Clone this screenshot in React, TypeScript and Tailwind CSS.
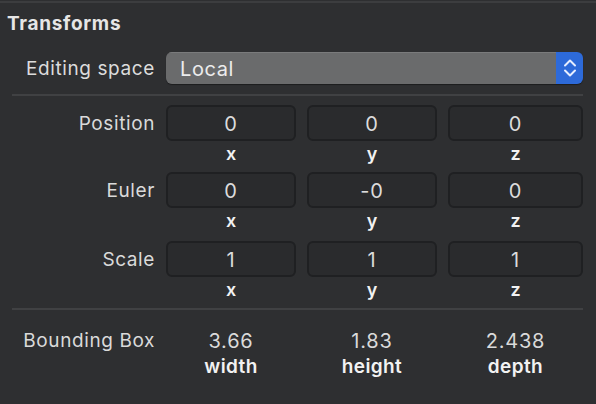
import React from "react";

const Box = ({ v }: { v: string }) => (
  <div className="h-[36px] rounded-[6px] border-2 border-[#1f2022] bg-[#2a2b2d] flex items-center justify-center pt-[2px] text-[20px] tracking-[0.8px] text-[#dcdcdc]">
    {v}
  </div>
);

const Axis = ({ t }: { t: string }) => (
  <div className="h-[24px] flex items-center justify-center text-[18px] font-semibold text-[#f2f2f2]">{t}</div>
);

const Row = ({ label, vals, mt }: { label: string; vals: string[]; mt: string }) => (
  <div className={`grid grid-cols-[155px_130px_130px_135px] gap-x-[11px] ${mt}`}>
    <div className="h-[36px] flex items-center justify-end pt-[3px] text-[19px] tracking-[0.6px] text-[#dadada]">{label}</div>
    <Box v={vals[0]} />
    <Box v={vals[1]} />
    <Box v={vals[2]} />
    <div />
    <Axis t="x" />
    <Axis t="y" />
    <Axis t="z" />
  </div>
);

export default function App() {
  return (
    <div className="w-[596px] h-[404px] bg-[#2e2f31] pt-px overflow-hidden" style={{ fontFamily: "Inter, 'Noto Sans', sans-serif" }}>
      <div className="h-[2px] bg-[#3c3d3f]" />
      <div className="h-[40px] flex items-center pt-[3px] pl-[7px] text-[19px] tracking-[0.7px] font-bold text-[#e6e6e6]">Transforms</div>
      <div className="mt-[9px] flex items-center h-[32px]">
        <div className="w-[166px] pl-[26px] pt-[2px] text-[19px] tracking-[0.6px] text-[#dcdcdc]">Editing space</div>
        <div className="flex-1 mr-[13px] h-[32px] flex rounded-[6px] overflow-hidden shadow-[0_1px_1px_rgba(0,0,0,0.4)]">
          <div className="flex-1 bg-[#6a6b6c] border-t border-[#7a7b7c] flex items-center pl-[14px] pt-[1px] text-[20px] tracking-[0.6px] text-[#ececec]">Local</div>
          <div className="w-[27px] bg-[#2d6ad9] flex items-center justify-center">
            <svg width="16" height="22" viewBox="0 0 16 22" fill="none" stroke="#e6eeff" strokeWidth="2" strokeLinecap="round" strokeLinejoin="round">
              <path d="M3 8.5 L8 3.5 L13 8.5" />
              <path d="M3 13.5 L8 18.5 L13 13.5" />
            </svg>
          </div>
        </div>
      </div>
      <div className="mt-[10px] ml-[12px] mr-[13px] h-[2px] bg-[#404143]" />
      <div>
        <Row label="Position" vals={["0", "0", "0"]} mt="mt-[9px]" />
        <Row label="Euler" vals={["0", "-0", "0"]} mt="mt-[7px]" />
        <Row label="Scale" vals={["1", "1", "1"]} mt="mt-[9px]" />
      </div>
      <div className="mt-[7px] ml-[12px] mr-[13px] h-[2px] bg-[#404143]" />
      <div className="grid grid-cols-[155px_130px_130px_135px] gap-x-[11px] mt-[19px]">
        <div className="h-[24px] flex items-center justify-end text-[19px] tracking-[0.6px] text-[#dadada]">Bounding Box</div>
        <div className="h-[24px] flex items-center justify-center text-[20px] tracking-[0.8px] text-[#dadada]">3.66</div>
        <div className="h-[24px] flex items-center justify-center text-[20px] tracking-[0.8px] text-[#dadada]">1.83</div>
        <div className="h-[24px] flex items-center justify-center text-[20px] tracking-[0.8px] text-[#dadada]">2.438</div>
        <div />
        <div className="h-[28px] flex items-center justify-center text-[19px] tracking-[0.4px] font-semibold text-[#f2f2f2]">width</div>
        <div className="h-[28px] flex items-center justify-center text-[19px] tracking-[0.4px] font-semibold text-[#f2f2f2]">height</div>
        <div className="h-[28px] flex items-center justify-center text-[19px] tracking-[0.4px] font-semibold text-[#f2f2f2]">depth</div>
      </div>
    </div>
  );
}
